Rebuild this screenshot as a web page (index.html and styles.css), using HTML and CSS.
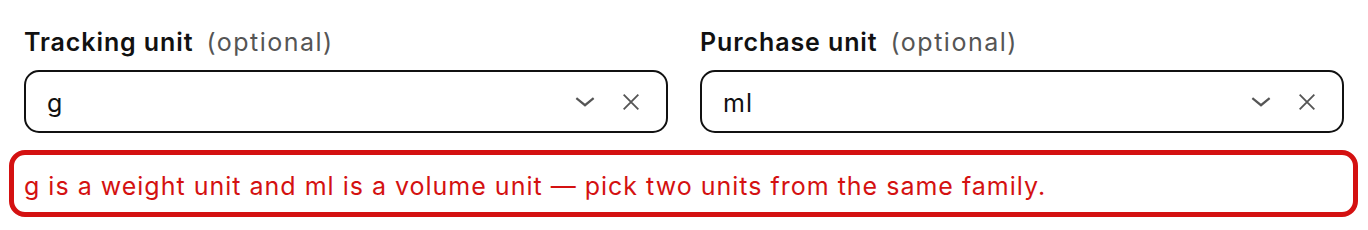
FILE: index.html
```html
<!DOCTYPE html>
<html lang="en">
<head>
  <meta charset="UTF-8" />
  <meta name="viewport" content="width=device-width, initial-scale=1.0"/>
  <title>Units</title>
  <link rel="stylesheet" href="styles.css">
</head>
<body>
  <main>
    <div class="unit-fields">
      <div class="field">
        <label class="field-label">Tracking unit<span class="optional">(optional)</span></label>
        <div class="select-box">
          <span class="select-value">g</span>
          <span class="select-icons">
            <svg class="icon" width="22" height="22" viewBox="0 0 24 24"><path d="M3.5 8.5l8.5 7 8.5-7" fill="none" stroke="#555" stroke-width="2.4" stroke-linecap="square"/></svg>
            <svg class="icon" width="22" height="22" viewBox="0 0 24 24"><path d="M4 4l16 16M20 4L4 20" fill="none" stroke="#555" stroke-width="2"/></svg>
          </span>
        </div>
      </div>
      <div class="field">
        <label class="field-label">Purchase unit<span class="optional">(optional)</span></label>
        <div class="select-box">
          <span class="select-value">ml</span>
          <span class="select-icons">
            <svg class="icon" width="22" height="22" viewBox="0 0 24 24"><path d="M3.5 8.5l8.5 7 8.5-7" fill="none" stroke="#555" stroke-width="2.4" stroke-linecap="square"/></svg>
            <svg class="icon" width="22" height="22" viewBox="0 0 24 24"><path d="M4 4l16 16M20 4L4 20" fill="none" stroke="#555" stroke-width="2"/></svg>
          </span>
        </div>
      </div>
    </div>
    <div class="unit-error">g is a weight unit and ml is a volume unit — pick two units from the same family.</div>
  </main>
</body>
</html>
```

FILE: styles.css
```css
body {
  font-family: "Inter", "Liberation Sans", sans-serif;
  margin: 0;
  padding: 0;
  background: #fff;
  color: #111;
}

main {
  padding-top: 28px;
}

.unit-fields {
  display: grid;
  grid-template-columns: 1fr 1fr;
  gap: 32px;
  padding: 0 24px;
}

.field-label {
  display: block;
  font-size: 25px;
  font-weight: 600;
  letter-spacing: 0.9px;
  line-height: 28px;
  margin-bottom: 14px;
}

.optional {
  font-weight: 400;
  color: #555;
  letter-spacing: 1.5px;
  margin-left: 13px;
}

.select-box {
  display: flex;
  align-items: center;
  justify-content: space-between;
  height: 63px;
  box-sizing: border-box;
  border: 2px solid #111;
  border-radius: 15px;
  padding: 0 24px 0 21px;
}

.select-value {
  font-size: 25px;
  letter-spacing: 1px;
  padding-top: 2px;
}

.select-icons {
  display: flex;
  align-items: center;
  gap: 24px;
}

.unit-error {
  margin: 17px 10px 0 9px;
  height: 67px;
  box-sizing: border-box;
  border: 5px solid #d41111;
  border-radius: 16px;
  padding: 4px 10px 0;
  display: flex;
  align-items: center;
  color: #d41111;
  font-size: 25px;
  letter-spacing: 1px;
}
```
